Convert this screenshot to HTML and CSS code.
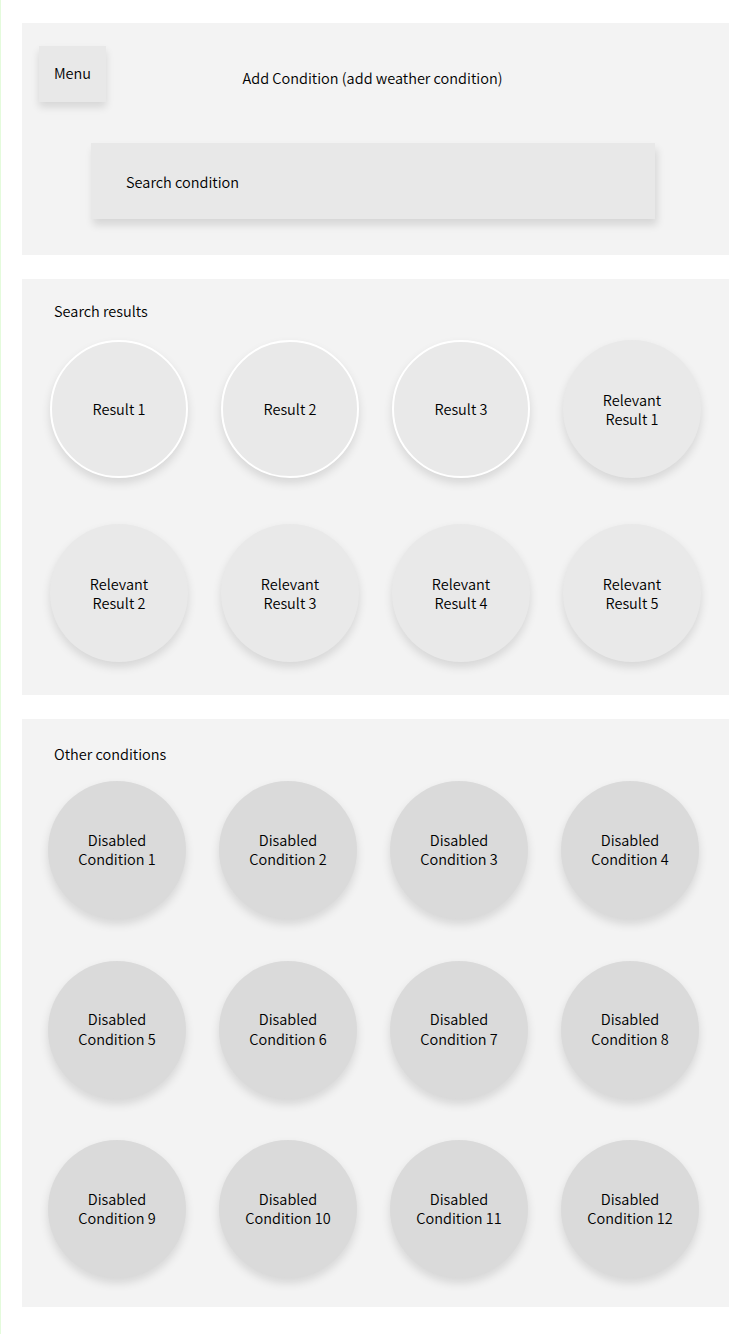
FILE: index.html
```html
<!DOCTYPE html>
<html lang="en">
<head>
    <meta charset="UTF-8">
    <meta name="viewport" content="width=device-width, initial-scale=1.0">
    <title>Add Condition</title>
    <link rel="stylesheet" href="styles.css">
</head>
<body>
    <div class="page">
        <!-- Header: menu, title and search -->
        <section class="panel panel-top">
            <div class="header">
                <button class="menu-btn">Menu</button>
                <h1 class="title">Add Condition (add weather condition)</h1>
                <div class="spacer"></div>
            </div>
            <div class="search-box">Search condition</div>
        </section>

        <!-- Search results -->
        <section class="panel panel-results">
            <h2 class="panel-label">Search results</h2>
            <div class="grid">
                <div class="bubble bubble-match">Result 1</div>
                <div class="bubble bubble-match">Result 2</div>
                <div class="bubble bubble-match">Result 3</div>
                <div class="bubble">Relevant<br>Result 1</div>
                <div class="bubble">Relevant<br>Result 2</div>
                <div class="bubble">Relevant<br>Result 3</div>
                <div class="bubble">Relevant<br>Result 4</div>
                <div class="bubble">Relevant<br>Result 5</div>
            </div>
        </section>

        <!-- Other conditions -->
        <section class="panel panel-other">
            <h2 class="panel-label">Other conditions</h2>
            <div class="grid grid-other" id="other-grid"></div>
        </section>
    </div>

    <script>
        const otherGrid = document.getElementById("other-grid");

        for (let i = 1; i <= 12; i++) {
            const bubble = document.createElement("div");
            bubble.className = "bubble bubble-disabled";
            bubble.innerHTML = `Disabled<br>Condition ${i}`;
            otherGrid.appendChild(bubble);
        }
    </script>
</body>
</html>
```

FILE: styles.css
```css
body {
    font-family: "Noto Sans CJK KR", "Noto Sans", sans-serif;
    font-size: 14.5px;
    font-weight: 350;
    color: #000;
    background: #fff;
    margin: 0;
    border-left: 1px solid #e4fbdc;
    min-height: 1334px;
    box-sizing: border-box;
}

.page {
    display: flex;
    flex-direction: column;
    gap: 24px;
    padding: 23px 22px 0 21px;
}

.panel {
    background: #f3f3f3;
}

.panel-top {
    padding: 23px 17px 36px 17px;
}

.header {
    display: flex;
    align-items: center;
}

.menu-btn {
    font: inherit;
    color: inherit;
    width: 67px;
    height: 56px;
    border: none;
    background: #e8e8e8;
    box-shadow: 0 5px 8px rgba(0, 0, 0, 0.12);
    padding: 0 0 4px 0;
}

.title {
    flex: 1;
    margin: 7px 0 0 0;
    font-size: inherit;
    font-weight: inherit;
    text-align: center;
    padding-right: 6px;
}

.spacer {
    width: 67px;
}

.search-box {
    margin: 41px 57px 0 52px;
    height: 76px;
    display: flex;
    align-items: center;
    padding-left: 35px;
    background: #e8e8e8;
    box-shadow: 2px 6px 8px rgba(0, 0, 0, 0.12);
}

.panel-label {
    margin: 0;
    font-size: inherit;
    font-weight: inherit;
    line-height: 20px;
    padding-left: 32px;
}

.panel-results {
    padding: 22px 0 33px 0;
}

.panel-other {
    padding: 25px 0 29px 0;
}

.grid {
    display: grid;
    grid-template-columns: repeat(4, 138px);
    column-gap: 33px;
    row-gap: 46px;
    padding: 0 28px;
    margin-top: 19px;
}

.grid-other {
    grid-template-rows: 138px 138px 138px;
    row-gap: 41.5px;
    padding: 0 30px 0 26px;
    margin-top: 17px;
}

.bubble {
    width: 138px;
    height: 138px;
    border-radius: 50%;
    box-sizing: border-box;
    background: #e9e9e9;
    box-shadow: 0 5px 10px rgba(0, 0, 0, 0.12);
    display: flex;
    align-items: center;
    justify-content: center;
    text-align: center;
    line-height: 19.5px;
}

.bubble-match {
    border: 2px solid #fff;
}

.bubble-disabled {
    background: #dadada;
    padding-bottom: 2px;
}
```
